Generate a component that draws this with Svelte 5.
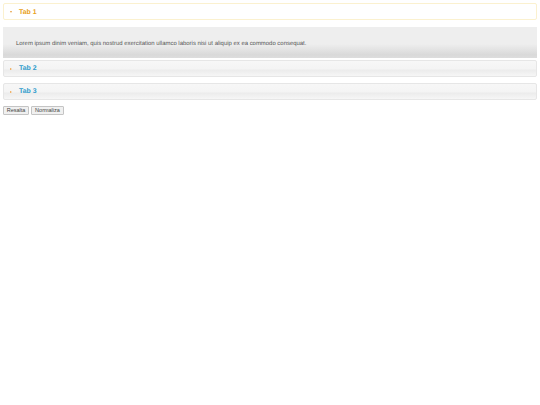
<script>
  const tabs = [
    { name: 'Tab 1', open: true, text: 'Lorem ipsum dinim veniam, quis nostrud exercitation ullamco laboris nisi ut aliquip ex ea commodo consequat.' },
    { name: 'Tab 2', open: false },
    { name: 'Tab 3', open: false }
  ];
</script>

<div class="page">
  <div class="accordion">
    {#each tabs as tab}
      <div class="tab" class:open={tab.open}>
        <span class="arrow" class:down={tab.open}></span>
        <b>{tab.name}</b>
      </div>
      {#if tab.open}
        <div class="panel"><p>{tab.text}</p></div>
      {/if}
    {/each}
  </div>
  <div class="buttons">
    <button class="highlight">Resalta</button>
    <button class="normal">Normaliza</button>
  </div>
</div>

<style>
  :global(body) {
    background: #fff;
  }

  .page {
    padding: 3px;
    width: 534px;
    font-family: "Liberation Sans", Arial, sans-serif;
    text-rendering: geometricPrecision;
  }

  .tab {
    display: flex;
    align-items: center;
    box-sizing: border-box;
    height: 16.5px;
    margin-bottom: 6.5px;
    padding: 0.5px 0 0 6px;
    border: 1px solid #e6e6e6;
    border-radius: 2px;
    background: linear-gradient(#f7f7f7 0%, #f4f4f4 50%, #ececec 62%, #f6f6f6 100%);
    font-size: 6.9px;
    color: #2f9ccc;
  }

  .tab.open {
    height: 17px;
    margin-bottom: 7px;
    padding-top: 1px;
    border-color: #fbf1cf;
    background: #fff;
    color: #e8a020;
  }

  .arrow {
    width: 0;
    height: 0;
    margin-right: 7px;
    border-top: 1.5px solid transparent;
    border-bottom: 1.5px solid transparent;
    border-left: 2px solid #f0a040;
  }

  .arrow.down {
    margin-right: 7px;
    border-top: 2px solid #e8a040;
    border-bottom: 0;
    border-left: 1.5px solid transparent;
    border-right: 1.5px solid transparent;
  }

  .panel {
    display: flex;
    align-items: center;
    box-sizing: border-box;
    height: 31px;
    margin-bottom: 2px;
    padding: 2px 0 0 13px;
    background: linear-gradient(#eeeeee 0%, #eeeeee 55%, #d9d9d9 90%, #dddddd 100%);
  }

  .panel p {
    margin: 0;
    font-size: 5.94px;
    color: #555;
  }

  .buttons {
    display: flex;
    gap: 2px;
  }

  button {
    box-sizing: border-box;
    height: 9px;
    padding: 1px 0 0;
    border: 1px solid #c4c4c4;
    border-radius: 1px;
    background: #f0f0f0;
    font-family: inherit;
    font-size: 5.5px;
    line-height: 1;
    color: #444;
  }

  .highlight {
    width: 26px;
  }

  .normal {
    width: 33px;
  }
</style>
